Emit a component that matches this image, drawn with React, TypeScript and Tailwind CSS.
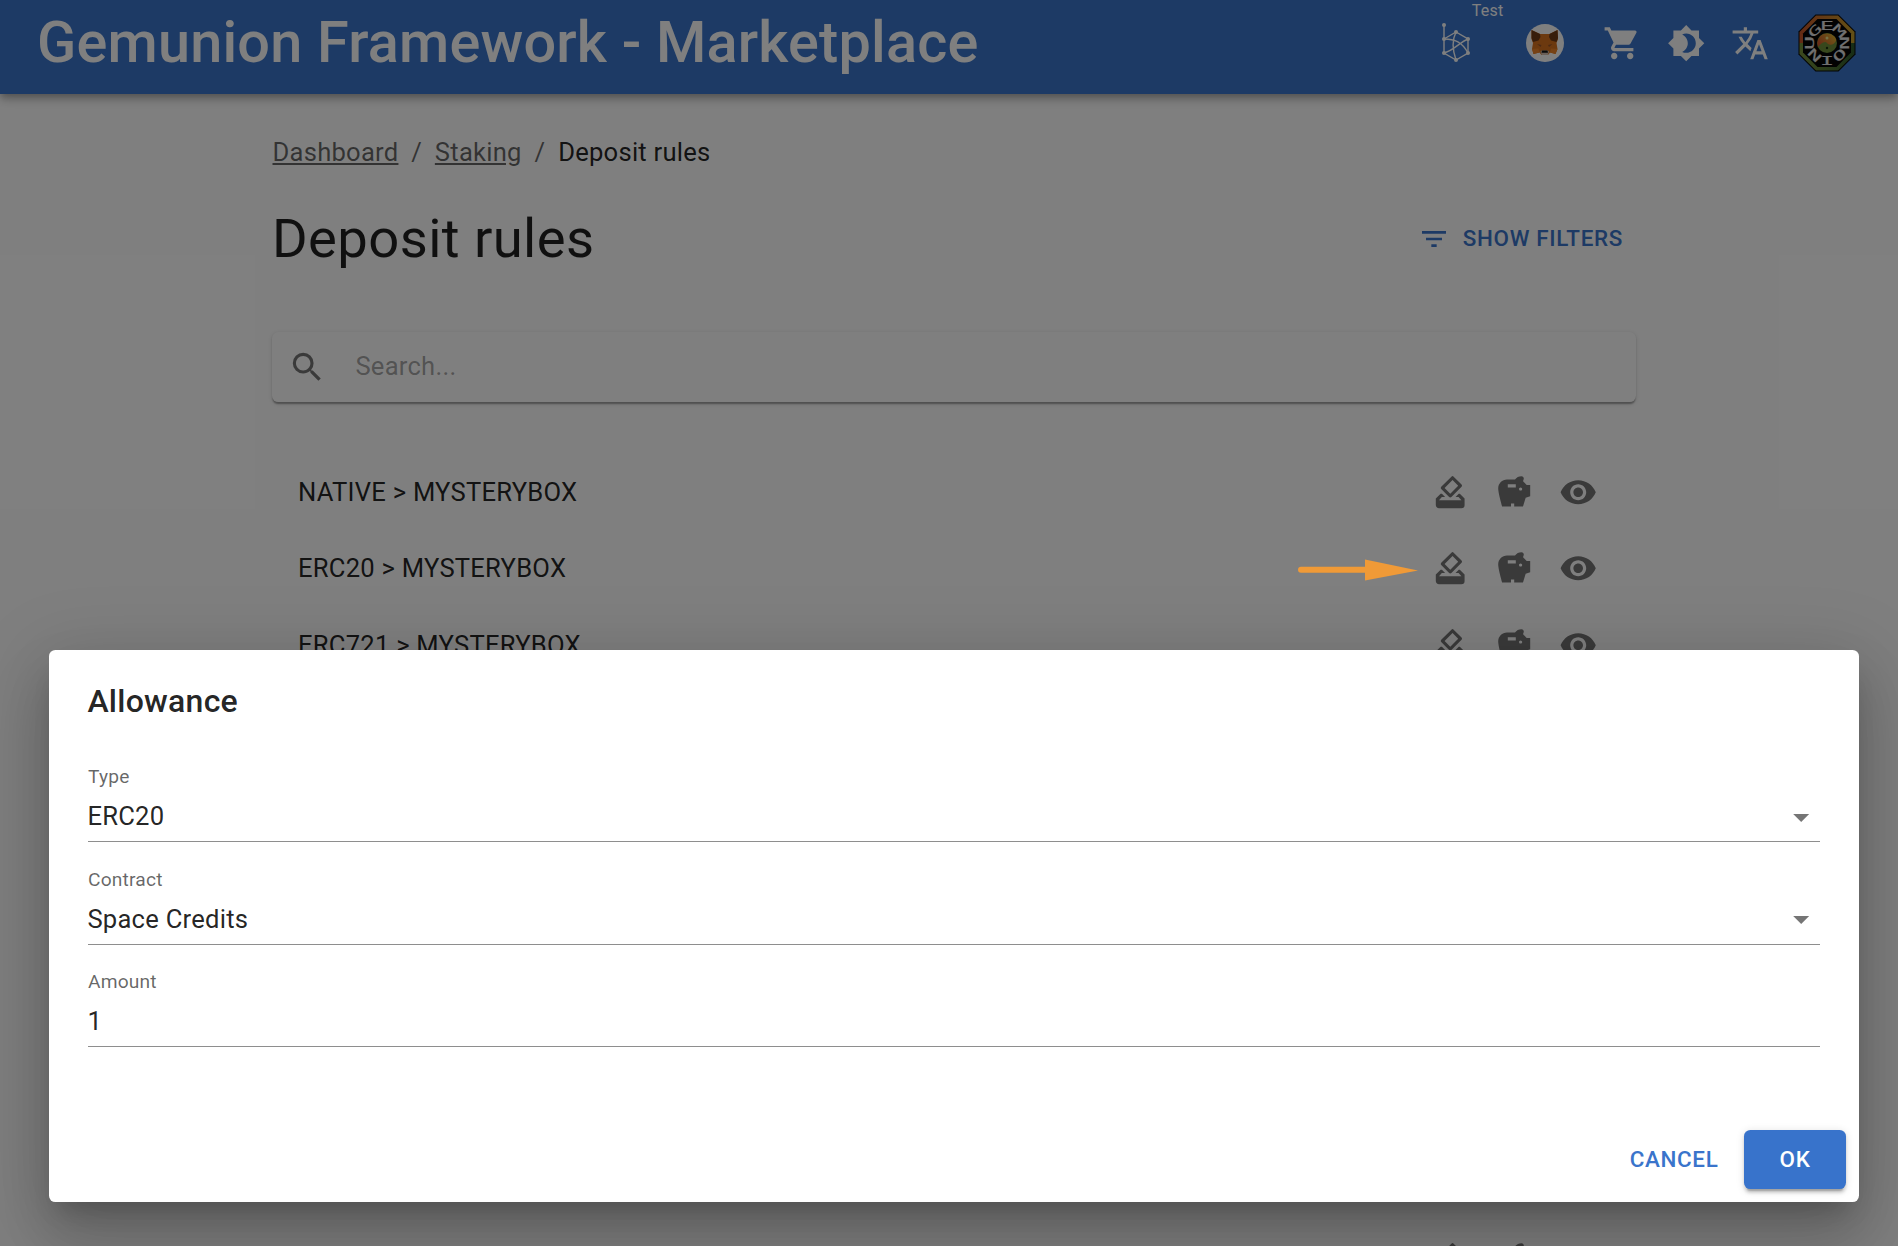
import React from "react";
import {
  MdArrowDropDown,
  MdBrightness4,
  MdFilterList,
  MdHowToVote,
  MdSavings,
  MdSearch,
  MdShoppingCart,
  MdTranslate,
  MdVisibility,
} from "react-icons/md";

function ChainIcon() {
  const dots: [number, number][] = [
    [4, 3],
    [16, 10],
    [28, 17],
    [28, 31],
    [16, 38],
    [4, 31],
    [4, 17],
  ];
  return (
    <svg width="32" height="42" viewBox="0 0 32 42" fill="none" stroke="#fff" strokeWidth="1.4">
      <path d="M4 3V31L16 38L28 31V17L16 10L4 17" />
      <path d="M4 17C15 17 22 20 28 31M28 17C20 20 13 29 4 31M16 10C12 18 12.500 28 16 38" />
      {dots.map(([x, y]) => (
        <circle key={x + "-" + y} cx={x} cy={y} r="2" fill="#fff" stroke="none" />
      ))}
    </svg>
  );
}

function FoxIcon() {
  return (
    <svg width="38" height="38" viewBox="0 0 38 38">
      <circle cx="19" cy="19" r="19" fill="#fff" />
      <path d="M5.500 6L14 10H23.500L31.500 6L32 15L30.500 19L31.500 25L29.500 30L24 28.500L22 31H15.500L13.500 28.500L7.500 30L6 25L7 19L5.500 15Z" fill="#d9731f" />
      <path d="M5.500 6L14 10L14.500 13L12.500 16.500L7 18L5.500 14Z" fill="#6f3a17" />
      <path d="M31.500 6L23.500 10L23 13L25 16.500L30.500 18L32 14Z" fill="#6f3a17" />
      <path d="M6 25L12.500 24.500L13.500 28.500L7.500 30ZM31.500 25L25 24.500L24 28.500L29.500 30Z" fill="#ee8428" />
      <path d="M11 20L15.500 21L14.500 23ZM26.500 20L22 21L23 23Z" fill="#9a5526" />
      <path d="M14.500 27.500L16 26.500H21.500L23 27.500L21.800 31H15.700Z" fill="#d7c1b3" />
      <path d="M16 26.500H21.500L22 28.800H15.500Z" fill="#161616" />
    </svg>
  );
}

const ring = [
  { letter: "E", angle: 0 },
  { letter: "M", angle: 46 },
  { letter: "N", angle: 90 },
  { letter: "O", angle: 134 },
  { letter: "I", angle: 180 },
  { letter: "N", angle: 226 },
  { letter: "U", angle: 270 },
  { letter: "G", angle: 315 },
];

function AvatarLogo() {
  return (
    <svg width="58" height="58" viewBox="0 0 58 58">
      <defs>
        <linearGradient id="rimTop" x1="0" x2="1" y1="0" y2="0">
          <stop offset="0" stopColor="#c8552a" />
          <stop offset="1" stopColor="#c9a22c" />
        </linearGradient>
        <linearGradient id="rimBottom" x1="0" x2="1" y1="0" y2="0">
          <stop offset="0" stopColor="#79943c" />
          <stop offset="1" stopColor="#2f5a2c" />
        </linearGradient>
        <linearGradient id="yang" x1="0" x2="1" y1="0.600" y2="0">
          <stop offset="0" stopColor="#d0562a" />
          <stop offset="1" stopColor="#e0c030" />
        </linearGradient>
      </defs>
      <path d="M17.500 0.500H40.500L57.500 17.500V40.500L40.500 57.500H17.500L0.500 40.500V17.500Z" fill="#080808" />
      <path d="M18 1.500H40L56.500 18V29H1.500V18Z" fill="url(#rimTop)" />
      <path d="M1.500 29H56.500V40L40 56.500H18L1.500 40Z" fill="url(#rimBottom)" />
      <path d="M19.500 5H38.500L53 19.500V38.500L38.500 53H19.500L5 38.500V19.500Z" fill="#050505" />
      {ring.map(({ letter, angle }) => (
        <text
          key={angle}
          x="0"
          y="0"
          textAnchor="middle"
          transform={`rotate(${angle} 29 29) translate(29 16.200) scale(1.850 1)`}
          fill="#e0e0e0"
          stroke="#e0e0e0"
          strokeWidth="0.150"
          fontFamily="'DejaVu Sans Mono', monospace"
          fontSize="12.500"
          letterSpacing="0"
        >
          {letter}
        </text>
      ))}
      <circle cx="29" cy="29" r="11" fill="#050505" />
      <circle cx="29" cy="29" r="10" fill="#6f8f38" />
      <path d="M20 33A9.800 9.800 0 1 1 38.300 26C37 31 31 32 29 29C27 26 22 30 20 33Z" fill="url(#yang)" />
      <circle cx="29" cy="24" r="1.500" fill="#ece38a" />
      <circle cx="29" cy="34" r="1.200" fill="#1c3010" />
    </svg>
  );
}

function RowActions() {
  return (
    <div className="flex gap-[25.6px] text-black/54">
      <MdHowToVote size={38.4} />
      <MdSavings size={38.4} />
      <MdVisibility size={38.4} />
    </div>
  );
}

function RuleRow({ label }: { label?: string }) {
  return (
    <div className="flex h-[76.6px] shrink-0 items-center justify-between pr-[38.4px] pl-[26px]">
      <span className="text-[25.6px] leading-[38.4px]">{label}</span>
      <RowActions />
    </div>
  );
}

function Field({ label, value, select }: { label: string; value: string; select?: boolean }) {
  return (
    <div className="flex h-[102.2px] flex-col">
      <span className="text-[19.2px] leading-[28px] tracking-[0.18px] text-black/60">{label}</span>
      <div className="flex h-[51px] items-center justify-between border-b border-[#8e8e8e]">
        <span className="-ml-[0.6px] text-[25.6px] leading-[38px]">{value}</span>
        {select && <MdArrowDropDown size={38.4} className="mt-[2px] text-black/54" />}
      </div>
    </div>
  );
}

export default function App() {
  return (
    <div className="relative h-[1246px] w-[1898px] overflow-hidden bg-white font-['Roboto',sans-serif] tracking-[0.24px] text-black/87">
      <header className="flex h-[94px] items-center justify-between bg-[#3a74cb] pr-[42px] pb-[8px] pl-[37px] text-white shadow-[0_3.2px_6.4px_-1.6px_rgba(0,0,0,0.2),0_6.4px_8px_0_rgba(0,0,0,0.14),0_1.6px_16px_0_rgba(0,0,0,0.12)]">
        <h1 className="text-[57.6px] leading-[72px] font-medium tracking-[0.0037em]">
          Gemunion Framework - Marketplace
        </h1>
        <div className="flex items-center">
          <div className="relative mr-[54px]">
            <ChainIcon />
            <span className="absolute -top-[21px] left-[32px] text-[16px] leading-[20px] tracking-[0.02em]">Test</span>
          </div>
          <FoxIcon />
          <MdShoppingCart size={38.4} className="ml-[39px]" />
          <MdBrightness4 size={38.4} className="ml-[25.6px]" />
          <MdTranslate size={38.4} className="ml-[25.6px]" />
          <div className="ml-[29px]">
            <AvatarLogo />
          </div>
        </div>
      </header>

      <main className="ml-[272px] flex w-[1364px] flex-col pt-[39px]">
        <nav className="flex gap-[12.8px] pl-[0.5px] text-[25.6px] leading-[38.4px] text-black/60">
          <a className="underline">Dashboard</a>
          <span>/</span>
          <a className="underline">Staking</a>
          <span>/</span>
          <span className="text-black/87">Deposit rules</span>
        </nav>
        <div className="mt-[33.8px] flex h-[67px] items-center justify-between">
          <h2 className="text-[54.4px] leading-[67px] tracking-[0.00735em]">Deposit rules</h2>
          <button className="flex items-center gap-[12.8px] pr-[13px] text-[22.4px] leading-[39px] font-medium tracking-[0.03em] text-[#3a74cb]">
            <MdFilterList size={32} />
            SHOW FILTERS
          </button>
        </div>
        <div className="mt-[59.8px] flex h-[70px] items-center rounded-[6.4px] bg-white pl-[16px] shadow-[0_3.2px_1.6px_-1.6px_rgba(0,0,0,0.2),0_1.6px_1.6px_0_rgba(0,0,0,0.14),0_1.6px_4.8px_0_rgba(0,0,0,0.12)]">
          <MdSearch size={38.4} className="text-black/54" />
          <span className="ml-[29px] pb-[1.4px] text-[25.6px] leading-[38px] text-black/37">Search...</span>
        </div>
        <div className="mt-[51.7px] flex flex-col">
          <RuleRow label="NATIVE &gt; MYSTERYBOX" />
          <RuleRow label="ERC20 &gt; MYSTERYBOX" />
          <RuleRow label="ERC721 &gt; MYSTERYBOX" />
          <div className="mt-[537.6px]">
            <RuleRow />
          </div>
        </div>
      </main>

      <div className="absolute inset-0 bg-black/50" />

      <section className="absolute top-[650px] left-[49px] flex h-[552px] w-[1810px] flex-col rounded-[6.4px] bg-white shadow-[0_17.6px_24px_-11.2px_rgba(0,0,0,0.2),0_38.4px_60.8px_4.8px_rgba(0,0,0,0.14),0_14.4px_73.6px_12.8px_rgba(0,0,0,0.12)]">
        <h3 className="px-[38.4px] pt-[25.6px] text-[32px] leading-[51.2px] font-medium tracking-[0.0078em]">
          Allowance
        </h3>
        <div className="mt-[36.7px] flex flex-col px-[39px]">
          <Field label="Type" value="ERC20" select />
          <Field label="Contract" value="Space Credits" select />
          <Field label="Amount" value="1" />
        </div>
        <div className="mt-auto flex items-center justify-end gap-[12.8px] p-[13px] text-[22.4px] leading-[39px] font-medium tracking-[0.02857em]">
          <button className="px-[12.8px] tracking-[0.03em] text-[#3a74cb]">CANCEL</button>
          <button className="h-[59px] w-[102px] rounded-[6.4px] bg-[#3873cb] text-white shadow-[0_4.8px_1.6px_-3.2px_rgba(0,0,0,0.2),0_3.2px_3.2px_0_rgba(0,0,0,0.14),0_1.6px_8px_0_rgba(0,0,0,0.12)]">
            OK
          </button>
        </div>
      </section>

      <svg className="absolute top-[559px] left-[1297px]" width="122" height="22" viewBox="0 0 122 22">
        <path d="M4 10.800H70" stroke="#f09a37" strokeWidth="6" strokeLinecap="round" />
        <path d="M68 0.500L121 11.500L68 21.500Z" fill="#f09a37" />
      </svg>
    </div>
  );
}
